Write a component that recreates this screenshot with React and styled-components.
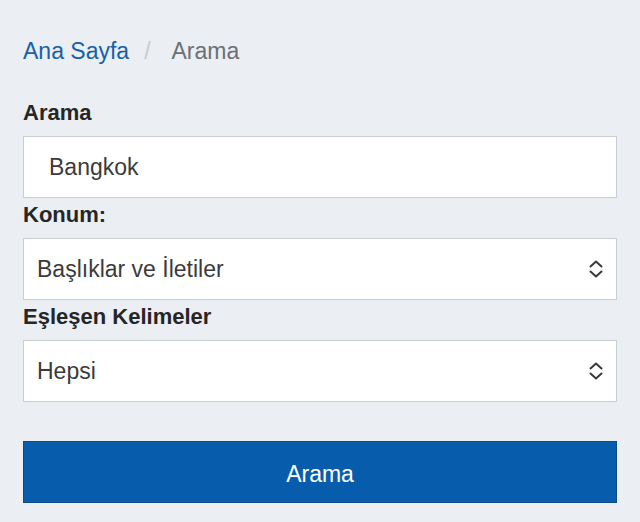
import React from "react";
import styled, { createGlobalStyle } from "styled-components";

const Global = createGlobalStyle`
  html, body {
    margin: 0;
    padding: 0;
    background: #ebeef2;
  }
  * {
    box-sizing: border-box;
  }
`;

export default function App() {
  const fields = [
    { id: "konum", label: "Konum:", value: "Başlıklar ve İletiler" },
    { id: "esles", label: "Eşleşen Kelimeler", value: "Hepsi" },
  ];

  return (
    <Page>
      <Global />
      <Crumbs>
        <CrumbLink>Ana Sayfa</CrumbLink>
        <Slash>/</Slash>
        <CrumbCurrent>Arama</CrumbCurrent>
      </Crumbs>

      <Form>
        <Label>Arama</Label>
        <Field>
          <InputText>Bangkok</InputText>
        </Field>

        {fields.map((f) => (
          <React.Fragment key={f.id}>
            <Label>{f.label}</Label>
            <Field $select>
              <SelectText>{f.value}</SelectText>
              <Chevrons />
            </Field>
          </React.Fragment>
        ))}

        <SubmitBtn type="button">Arama</SubmitBtn>
      </Form>
    </Page>
  );
}

function Chevrons() {
  return (
    <Icon width="16" height="20" viewBox="0 0 16 20" aria-hidden="true">
      <path
        d="M2.5 7.5 L8 2.5 L13.5 7.5 M2.5 12.5 L8 17.5 L13.5 12.5"
        fill="none"
        stroke="#3a3a3a"
        strokeWidth="2"
        strokeLinecap="round"
        strokeLinejoin="round"
      />
    </Icon>
  );
}

/* ===== styles ===== */

const Page = styled.div`
  min-height: 522px;
  padding: 32px 23px 0;
  font-family: "Liberation Sans", Arial, sans-serif;
`;

const Crumbs = styled.nav`
  display: flex;
  align-items: center;
  height: 36px;
  margin-bottom: 28px;
  padding-top: 2px;
  font-size: 23px;
`;

const CrumbLink = styled.span`
  color: #1761a8;
`;

const Slash = styled.span`
  margin: 0 21px 0 15px;
  color: #c6cbd0;
`;

const CrumbCurrent = styled.span`
  color: #6b7077;
`;

const Form = styled.div`
  display: flex;
  flex-direction: column;
`;

const Label = styled.div`
  height: 34px;
  line-height: 34px;
  margin-bottom: 6px;
  font-size: 22px;
  font-weight: 700;
  color: #262626;
`;

const Field = styled.div`
  display: flex;
  align-items: center;
  height: 62px;
  padding: ${(p) => (p.$select ? "0 12px 0 13px" : "0 25px")};
  background: #fff;
  border: 1px solid #cacdd1;
`;

const InputText = styled.span`
  font-size: 23px;
  color: #3b3b3b;
`;

const SelectText = styled.span`
  flex: 1;
  font-size: 23px;
  color: #3b3b3b;
`;

const Icon = styled.svg`
  display: block;
`;

const SubmitBtn = styled.button`
  margin-top: 39px;
  height: 62px;
  width: 100%;
  padding: 4px 0 0;
  border: 1px solid #0b4a86;
  background: #075dac;
  color: #fff;
  font-family: "Liberation Sans", Arial, sans-serif;
  font-size: 23px;
  cursor: pointer;
`;
